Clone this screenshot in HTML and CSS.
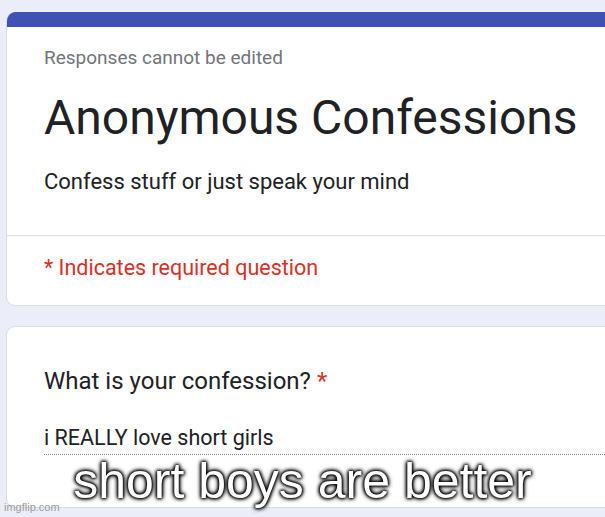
FILE: index.html
```html
<!DOCTYPE html>
<html>
<head>
<meta charset="utf-8">
<link rel="stylesheet" href="styles.css">
</head>
<body>
<div class="page">
  <div class="card header-card">
    <div class="bar"></div>
    <div class="head-body">
      <div class="note">Responses cannot be edited</div>
      <div class="title">Anonymous Confessions</div>
      <div class="desc">Confess stuff or just speak your mind</div>
    </div>
    <div class="required-row">
      <div class="required">* Indicates required question</div>
    </div>
  </div>
  <div class="card question-card">
    <div class="question">What is your confession? <span class="star">*</span></div>
    <div class="answer">i REALLY love short girls</div>
  </div>
</div>
<div class="caption">short boys are better</div>
<div class="watermark">imgflip.com</div>
</body>
</html>
```
FILE: styles.css
```css
html, body {
  margin: 0;
  padding: 0;
  width: 605px;
  height: 517px;
  overflow: hidden;
  background: #ebeef8;
  font-family: Roboto, "Liberation Sans", sans-serif;
  position: relative;
}
.page {
  padding: 12px 0 0 6px;
  display: flex;
  flex-direction: column;
  gap: 20px;
  width: 680px;
}
.card {
  background: #ffffff;
  border: 1px solid #dadce0;
  border-radius: 9px;
  overflow: hidden;
}
.header-card {
  border-top: none;
}
.bar {
  height: 15px;
  background: #3f51b5;
}
.head-body {
  padding: 19px 0 38px 37px;
  border-bottom: 1px solid #dadce0;
}
.note {
  font-size: 19px;
  line-height: 24px;
  color: #70757a;
}
.title {
  margin-top: 20px;
  font-size: 48px;
  line-height: 56px;
  color: #202124;
}
.desc {
  margin-top: 21px;
  font-size: 22px;
  line-height: 30px;
  color: #202124;
}
.required-row {
  padding: 19px 0 24px 37px;
}
.required {
  font-size: 21.5px;
  line-height: 26px;
  color: #d93025;
}
.question-card {
  padding: 40px 0 52px 37px;
}
.question {
  font-size: 24px;
  line-height: 28px;
  color: #202124;
}
.star {
  color: #d93025;
}
.answer {
  margin-top: 30px;
  font-size: 21.5px;
  line-height: 26px;
  color: #202124;
  padding-bottom: 3px;
  border-bottom: 1px dotted #80868b;
}
.caption {
  position: absolute;
  left: 0;
  right: 0;
  top: 451px;
  text-align: center;
  font-family: "Liberation Sans", Arial, sans-serif;
  font-size: 50px;
  line-height: 60px;
  color: #ffffff;
  text-shadow: 0 0 3px #000, 0 0 3px #000, 0 0 5px #000, 0 0 5px #000;
}
.watermark {
  position: absolute;
  left: 4px;
  top: 500px;
  font-family: "Liberation Sans", Arial, sans-serif;
  font-size: 11px;
  line-height: 14px;
  color: #9a9a9a;
}
```
